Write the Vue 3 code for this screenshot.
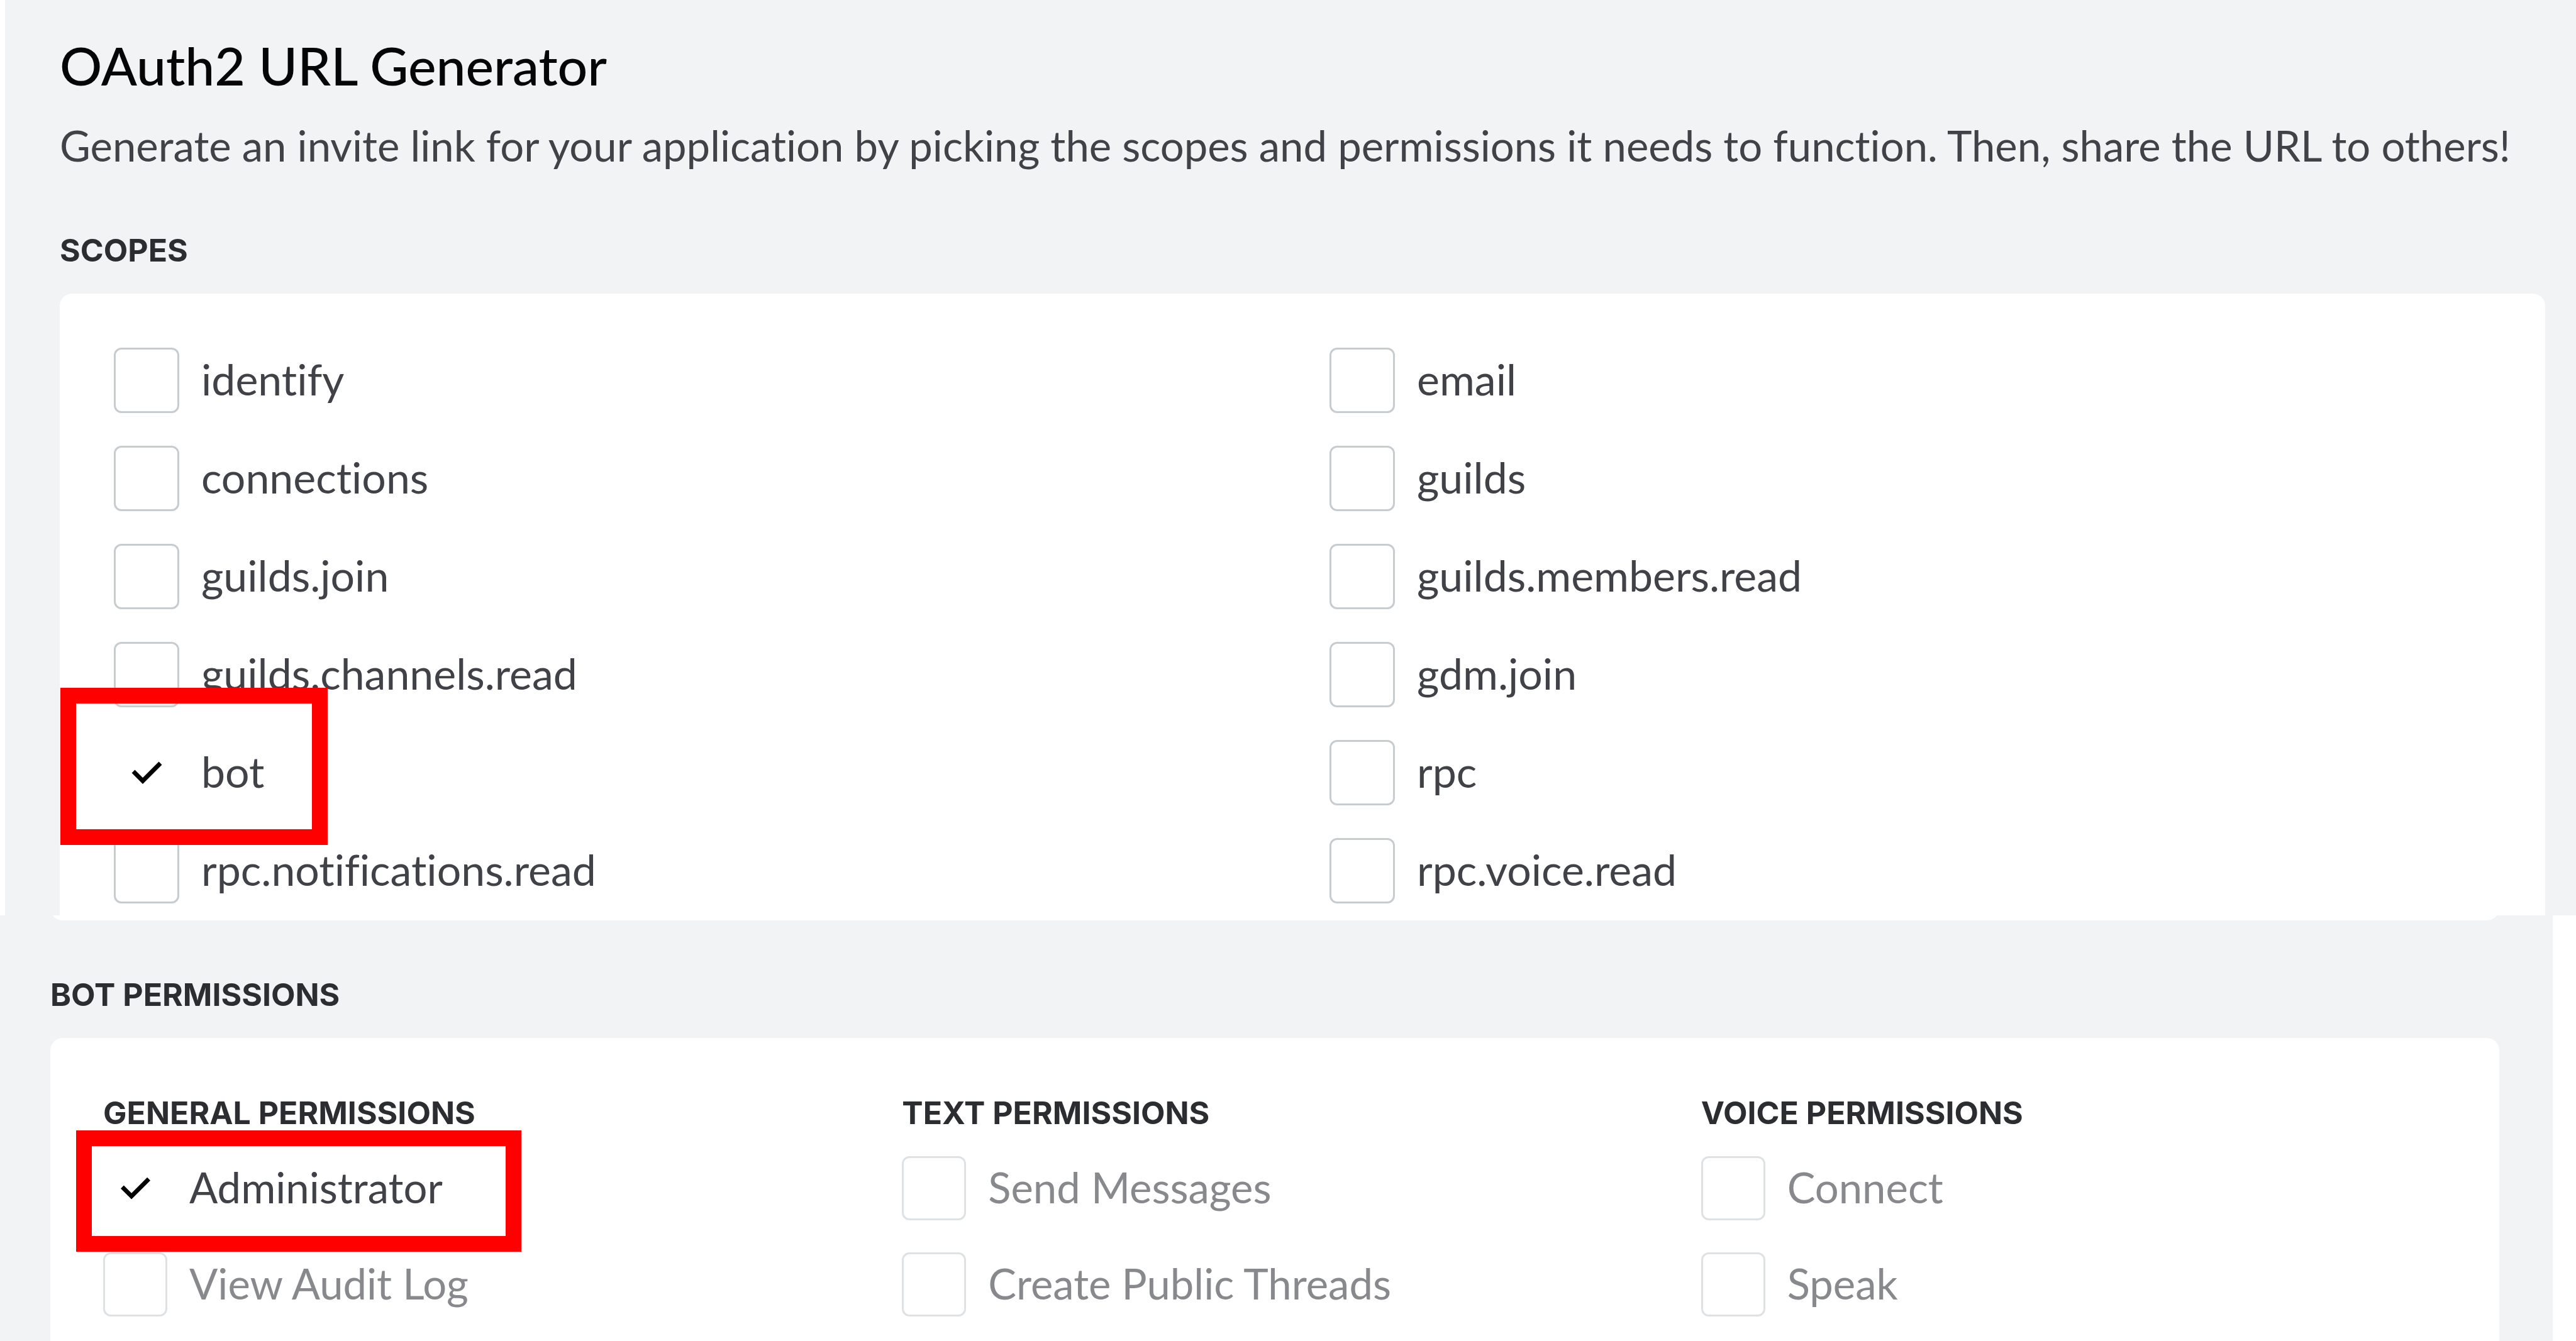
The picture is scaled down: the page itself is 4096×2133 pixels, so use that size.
<script setup>
import { reactive } from 'vue'

const scopes = reactive([
  { name: 'identify', checked: false },
  { name: 'email', checked: false },
  { name: 'connections', checked: false },
  { name: 'guilds', checked: false },
  { name: 'guilds.join', checked: false },
  { name: 'guilds.members.read', checked: false },
  { name: 'guilds.channels.read', checked: false },
  { name: 'gdm.join', checked: false },
  { name: 'bot', checked: true, marked: true },
  { name: 'rpc', checked: false },
  { name: 'rpc.notifications.read', checked: false },
  { name: 'rpc.voice.read', checked: false },
])

const groups = reactive([
  {
    title: 'General Permissions',
    items: [
      { name: 'Administrator', checked: true, marked: true },
      { name: 'View Audit Log', checked: false, disabled: true },
    ],
  },
  {
    title: 'Text Permissions',
    items: [
      { name: 'Send Messages', checked: false, disabled: true },
      { name: 'Create Public Threads', checked: false, disabled: true },
    ],
  },
  {
    title: 'Voice Permissions',
    items: [
      { name: 'Connect', checked: false, disabled: true },
      { name: 'Speak', checked: false, disabled: true },
    ],
  },
])
</script>

<template>
  <main class="page">
    <section class="generator">
      <h1 class="title">OAuth2 URL Generator</h1>
      <p class="intro">
        Generate an invite link for your application by picking the scopes and permissions it needs
        to function. Then, share the URL to others!
      </p>
      <h2 class="eyebrow">Scopes</h2>
      <div class="card scopes">
        <label v-for="s in scopes" :key="s.name" class="option">
          <span class="box">
            <input v-model="s.checked" type="checkbox" class="check" />
            <svg v-if="s.checked" class="tick" viewBox="0 0 104 104" aria-hidden="true">
              <path d="M31 50 46 65 74 37" />
            </svg>
          </span>
          <span class="text">{{ s.name }}</span>
          <span v-if="s.marked" class="mark mark-scope"></span>
        </label>
      </div>
    </section>

    <section class="permissions">
      <div class="tail"><div class="tail-card"></div></div>
      <h2 class="eyebrow">Bot Permissions</h2>
      <div class="card groups">
        <div v-for="g in groups" :key="g.title" class="group">
          <h3 class="eyebrow">{{ g.title }}</h3>
          <div class="list">
            <label
              v-for="p in g.items"
              :key="p.name"
              class="option"
              :class="{ dim: p.disabled }"
            >
              <span class="box">
                <input v-model="p.checked" type="checkbox" class="check" :disabled="p.disabled" />
                <svg v-if="p.checked" class="tick" viewBox="0 0 104 104" aria-hidden="true">
                  <path d="M31 50 46 65 74 37" />
                </svg>
              </span>
              <span class="text">{{ p.name }}</span>
              <span v-if="p.marked" class="mark mark-permission"></span>
            </label>
          </div>
        </div>
      </div>
    </section>
  </main>
</template>

<style>
body {
  margin: 0;
  background: #fff;
}
</style>

<style scoped>
.page {
  --box: 104px;
  display: flex;
  flex-direction: column;
  min-height: 100vh;
  font-family: Lato, 'Open Sans', sans-serif;
  font-variant-ligatures: none;
  color: #404248;
}

.generator {
  padding: 54px 49px 0 87px;
  border-left: 8px solid #fff;
  background: #f2f3f5;
}

.title {
  margin: 0 0 37px;
  font-size: 84px;
  font-weight: 500;
  line-height: 100px;
  color: #060607;
}

.intro {
  margin: 0 0 97px;
  font-size: 67px;
  line-height: 80px;
}

.eyebrow {
  margin: 0 0 39px;
  font-family: Inter, sans-serif;
  font-size: 50px;
  font-weight: 700;
  line-height: 60px;
  text-transform: uppercase;
  color: #2b2d31;
}

.card {
  border-radius: 20px 20px 0 0;
  background: #fff;
}

.scopes {
  display: grid;
  grid-template-columns: repeat(2, minmax(0, 1fr));
  gap: 52px 88px;
  padding: 86px 88px 19px 86px;
}

.option {
  position: relative;
  display: flex;
  align-items: center;
  gap: 35px;
  font-size: 68px;
  line-height: 80px;
}

.box {
  position: relative;
  flex: none;
  width: var(--box);
  height: var(--box);
}

.check {
  display: block;
  box-sizing: border-box;
  width: 100%;
  height: 100%;
  margin: 0;
  border: 3px solid #c7ccd1;
  border-radius: 12px;
  background: #fff;
  appearance: none;
}

.check:checked {
  border-color: transparent;
}

.check:disabled {
  border-color: #dfe2e5;
}

.tick {
  position: absolute;
  inset: 0;
  fill: none;
  stroke: #000;
  stroke-width: 7;
  pointer-events: none;
}

.text {
  padding-bottom: 4px;
}

.dim {
  color: #88898c;
}

.mark {
  position: absolute;
  z-index: 1;
  box-sizing: border-box;
  border: 25px solid #f00;
  pointer-events: none;
}

.mark-scope {
  top: -83px;
  left: -85px;
  width: 425px;
  height: 250px;
}

.mark-permission {
  top: -41px;
  left: -43px;
  width: 708px;
  height: 193px;
}

.permissions {
  --box: 102px;
  display: flex;
  flex: 1;
  flex-direction: column;
  padding: 0 85px 0 80px;
  border-right: 37px solid #fff;
  background: #f2f3f5;
}

/* Rounded lower edge of the card that ends above this section */
.tail {
  display: flex;
  align-items: flex-end;
  height: 8px;
  margin-bottom: 88px;
  overflow: hidden;
}

.tail-card {
  flex: 1;
  height: 40px;
  border-radius: 20px;
  background: #fff;
}

.groups {
  display: grid;
  flex: 1;
  grid-template-columns: repeat(3, minmax(0, 1fr));
  gap: 88px;
  padding: 89px 87px 39px 84px;
}

.list {
  display: grid;
  gap: 51px;
}

.list .option {
  font-size: 67px;
}
</style>
